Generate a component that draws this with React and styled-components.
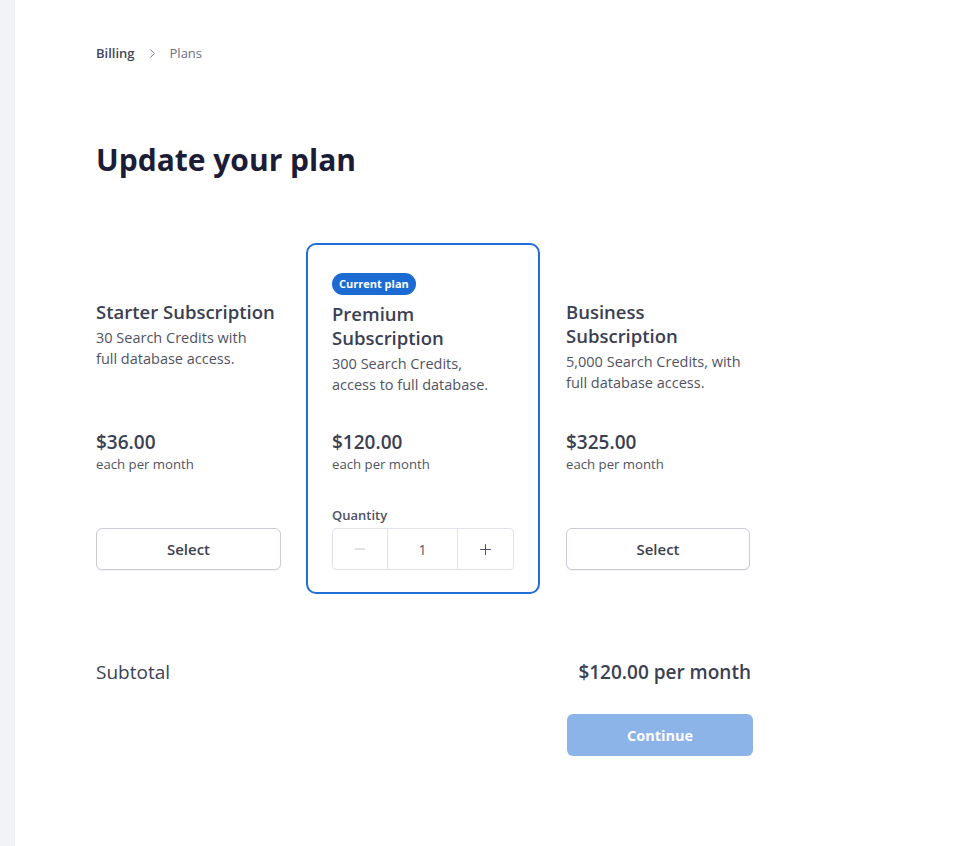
import React from 'react'
import styled, { createGlobalStyle } from 'styled-components'
import { ChevronRight, Minus, Plus } from 'lucide-react'

const GlobalStyle = createGlobalStyle`
  * { box-sizing: border-box; }
  html, body { margin: 0; padding: 0; background: #ffffff; }
  body {
    font-family: "Open Sans", "Noto Sans", "Liberation Sans", sans-serif;
    color: #3c3f52;
  }
`

const Shell = styled.div`
  display: flex;
  min-height: 846px;
`

const SideStrip = styled.div`
  width: 15px;
  flex-shrink: 0;
  background: #f2f3f7;
  border-right: 1px solid #eceef3;
`

const Main = styled.main`
  flex: 1;
  padding: 44px 0 0 81px;
`

const Crumbs = styled.nav`
  display: flex;
  align-items: center;
  gap: 10px;
  font-size: 13px;
  line-height: 18px;
  color: #6b6f82;
  svg { color: #6b6f82; }
`

const CrumbLink = styled.span`
  font-weight: 600;
  color: #44475a;
`

const Title = styled.h1`
  margin: 78px 0 0;
  font-size: 30px;
  line-height: 40px;
  font-weight: 700;
  color: #1b1c36;
`

const Plans = styled.div`
  margin-top: 63px;
  display: grid;
  grid-template-columns: 185px 234px 185px;
  column-gap: 25px;
  width: 655px;
  align-items: stretch;
  & > :last-child { margin-left: 1px; }
`

const PlanCard = styled.div`
  display: flex;
  flex-direction: column;
  padding: ${p => (p.$current ? '26px 24px 22px' : '28px 0 24px')};
  border: ${p => (p.$current ? '2px solid #1f6fd6' : 'none')};
  border-radius: 10px;
`

const Head = styled.div`
  min-height: 159px;
`

const Badge = styled.span`
  display: inline-flex;
  align-items: center;
  height: 22px;
  padding: 0 7px;
  border-radius: 11px;
  background: #1b6bd3;
  color: #ffffff;
  font-size: 11px;
  font-weight: 700;
  visibility: ${p => (p.$hidden ? 'hidden' : 'visible')};
`

const PlanName = styled.h2`
  margin: ${p => (p.$current ? '7px' : '5px')} 0 0;
  font-size: 18.5px;
  line-height: 24px;
  font-weight: 600;
  color: #3c3f52;
`

const PlanDesc = styled.p`
  margin: 3px 0 0;
  font-size: 14.5px;
  line-height: 21px;
  color: #50535f;
  white-space: pre-line;
`

const Price = styled.div`
  font-size: 19px;
  line-height: 24px;
  font-weight: 600;
  color: #3c3f52;
`

const PriceNote = styled.div`
  margin-top: 1px;
  font-size: 13.2px;
  line-height: 18px;
  color: #50535f;
`

const Action = styled.div`
  margin-top: 33px;
  min-height: 64px;
  display: flex;
  flex-direction: column;
  justify-content: flex-end;
`

const SelectButton = styled.button`
  display: block;
  width: 100%;
  height: 42px;
  border: 1px solid #c9ccd5;
  border-radius: 6px;
  background: #ffffff;
  box-shadow: 0 1px 1px rgba(20, 24, 40, 0.06);
  font-family: inherit;
  font-size: 15px;
  font-weight: 600;
  color: #3c3f52;
  cursor: pointer;
`

const QtyLabel = styled.div`
  font-size: 13px;
  line-height: 18px;
  font-weight: 600;
  color: #4f5264;
  margin-bottom: 4px;
`

const Stepper = styled.div`
  display: grid;
  grid-template-columns: 54px 1fr 55px;
  height: 42px;
  border: 1px solid #e0e3e9;
  border-radius: 4px;
`

const StepButton = styled.button`
  display: flex;
  align-items: center;
  justify-content: center;
  border: none;
  background: transparent;
  padding: 0;
  color: ${p => (p.$disabled ? '#c3c6cf' : '#4f5264')};
  cursor: pointer;
`

const StepValue = styled.div`
  display: flex;
  align-items: center;
  justify-content: center;
  border-left: 1px solid #e0e3e9;
  border-right: 1px solid #e0e3e9;
  font-size: 14px;
  color: #4f5264;
`

const Summary = styled.div`
  width: 655px;
  margin-top: 65px;
  display: flex;
  justify-content: space-between;
  align-items: center;
  font-size: 19px;
  line-height: 26px;
  color: #3c3f52;
`

const SummaryLabel = styled.span`
  font-weight: 500;
`

const SummaryValue = styled.span`
  font-weight: 600;
`

const Footer = styled.div`
  width: 657px;
  margin-top: 29px;
  display: flex;
  justify-content: flex-end;
`

const ContinueButton = styled.button`
  width: 186px;
  height: 42px;
  border: none;
  border-radius: 6px;
  background: #8cb4e8;
  color: #ffffff;
  font-family: inherit;
  font-size: 14.5px;
  font-weight: 700;
  cursor: not-allowed;
`

const plans = [
  { id: 'starter', name: 'Starter Subscription', desc: '30 Search Credits with\nfull database access.', price: '$36.00' },
  { id: 'premium', name: 'Premium Subscription', desc: '300 Search Credits,\naccess to full database.', price: '$120.00', current: true },
  { id: 'business', name: 'Business Subscription', desc: '5,000 Search Credits, with\nfull database access.', price: '$325.00' },
]

const App = () => {
  return (
    <>
      <GlobalStyle />
      <Shell>
        <SideStrip />
        <Main>
          <Crumbs>
            <CrumbLink>Billing</CrumbLink>
            <ChevronRight size={15} strokeWidth={1.5} />
            <span>Plans</span>
          </Crumbs>
          <Title>Update your plan</Title>
          <Plans>
            {plans.map(plan => (
              <PlanCard key={plan.id} $current={plan.current}>
                <Head>
                  <Badge $hidden={!plan.current}>Current plan</Badge>
                  <PlanName $current={plan.current}>{plan.name}</PlanName>
                  <PlanDesc>{plan.desc}</PlanDesc>
                </Head>
                <Price>{plan.price}</Price>
                <PriceNote>each per month</PriceNote>
                <Action>
                  {plan.current ? (
                    <>
                      <QtyLabel>Quantity</QtyLabel>
                      <Stepper>
                        <StepButton $disabled aria-label="Decrease">
                          <Minus size={16} strokeWidth={1.5} />
                        </StepButton>
                        <StepValue>1</StepValue>
                        <StepButton aria-label="Increase">
                          <Plus size={17} strokeWidth={1.5} />
                        </StepButton>
                      </Stepper>
                    </>
                  ) : (
                    <SelectButton>Select</SelectButton>
                  )}
                </Action>
              </PlanCard>
            ))}
          </Plans>
          <Summary>
            <SummaryLabel>Subtotal</SummaryLabel>
            <SummaryValue>$120.00 per month</SummaryValue>
          </Summary>
          <Footer>
            <ContinueButton disabled>Continue</ContinueButton>
          </Footer>
        </Main>
      </Shell>
    </>
  )
}

export default App
